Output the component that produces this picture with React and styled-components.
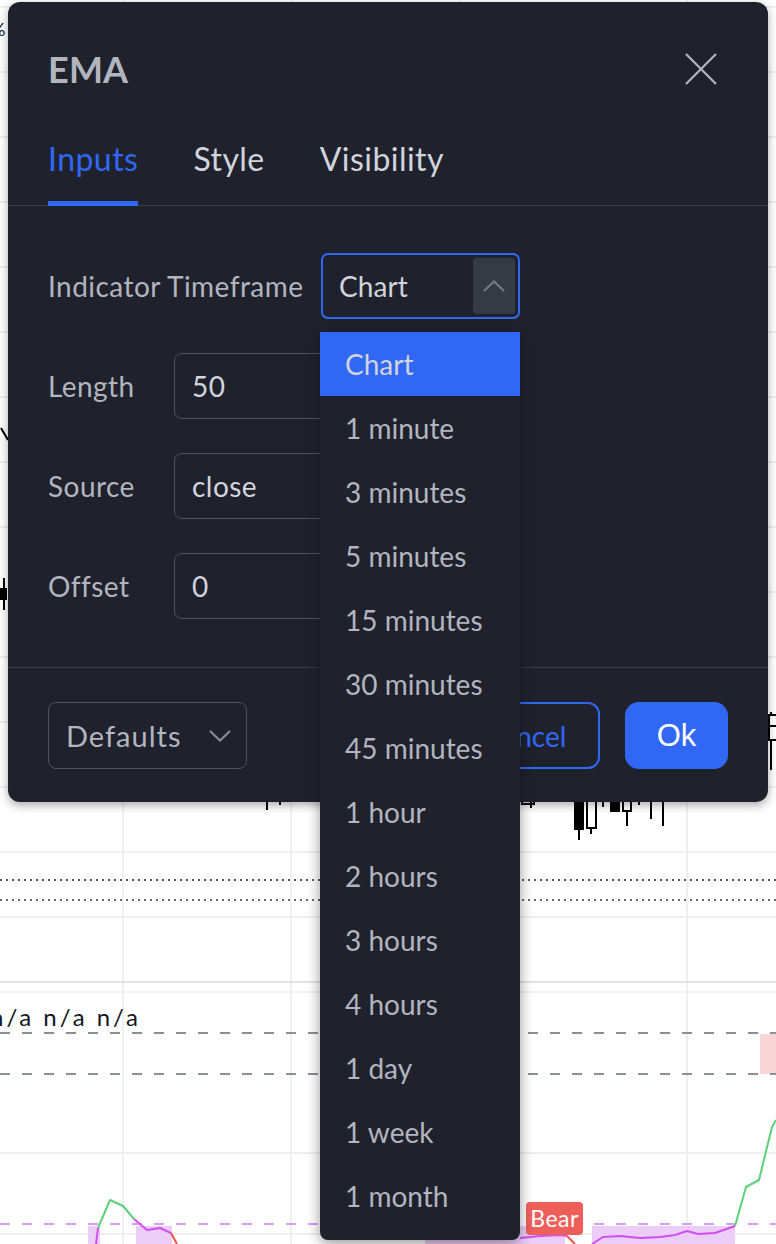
import React from "react";
import styled, { createGlobalStyle } from "styled-components";

const GlobalStyle = createGlobalStyle`
  html, body {
    margin: 0;
    padding: 0;
    background: #ffffff;
  }
  body {
    font-family: Lato, "Noto Sans", sans-serif;
    letter-spacing: 0.45px;
  }
  * {
    box-sizing: border-box;
  }
`;

const blue = "#3068f5";
const panel = "#1f222d";
const labelGray = "#b2b5be";
const textLight = "#d1d4dc";
const lineGray = "#3a3e4a";
const borderGray = "#50535e";

const Page = styled.div`
  position: relative;
  width: 776px;
  height: 1244px;
  overflow: hidden;
  background: #ffffff;
`;

const ChartSvg = styled.svg`
  display: block;
`;

const Dialog = styled.div`
  position: absolute;
  left: 8px;
  top: 2px;
  width: 760px;
  height: 800px;
  display: flex;
  flex-direction: column;
  background: ${panel};
  border-radius: 12px;
  box-shadow: 0 3px 10px rgba(0, 0, 0, 0.35);
`;

const TitleRow = styled.div`
  display: flex;
  align-items: center;
  justify-content: space-between;
  height: 134px;
  padding: 0 51px 0 40px;
`;

const Title = styled.h2`
  margin: 0;
  font-size: 36px;
  font-weight: 700;
  color: ${labelGray};
  letter-spacing: 0.2px;
`;

const CloseBtn = styled.div`
  display: flex;
  width: 32px;
  height: 32px;
`;

const TabBar = styled.div`
  display: flex;
  gap: 55px;
  height: 70px;
  padding: 0 40px;
  border-bottom: 1px solid ${lineGray};
`;

const Tab = styled.div`
  height: calc(100% + 1px);
  margin-bottom: -1px;
  padding-top: 3px;
  font-size: 32px;
  line-height: 40px;
  color: ${({ $active }) => ($active ? blue : textLight)};
  border-bottom: 5px solid ${({ $active }) => ($active ? blue : "transparent")};
`;

const Body = styled.div`
  display: flex;
  flex-direction: column;
  gap: 34px;
  padding: 47px 40px 48px;
`;

const Row = styled.div`
  display: flex;
  align-items: center;
  height: 66px;
`;

const Label = styled.div`
  width: ${({ $w }) => $w}px;
  flex-shrink: 0;
  font-size: 28px;
  color: ${labelGray};
  white-space: nowrap;
`;

const SelectWrap = styled.div`
  position: relative;
`;

const SelectBox = styled.div`
  display: flex;
  align-items: center;
  width: 199px;
  height: 66px;
  padding: 0 3px 0 16px;
  border: 2px solid ${blue};
  border-radius: 7px;
  font-size: 28px;
  letter-spacing: 0.1px;
  color: ${textLight};
`;

const ArrowBtn = styled.div`
  display: flex;
  align-items: center;
  justify-content: center;
  margin-left: auto;
  width: 42px;
  height: 56px;
  background: #363a45;
  border-radius: 4px;
`;

const Input = styled.div`
  display: flex;
  align-items: center;
  width: 330px;
  height: 66px;
  padding-left: 17px;
  border: 1.5px solid ${borderGray};
  border-radius: 8px;
  font-size: 28px;
  color: ${textLight};
`;

const Menu = styled.div`
  position: absolute;
  top: calc(100% + 13px);
  left: -1px;
  z-index: 5;
  width: 200px;
  padding-bottom: 12px;
  background: ${panel};
  border-radius: 0 0 8px 8px;
  box-shadow: 0 4px 14px rgba(0, 0, 0, 0.4);
`;

const MenuItem = styled.div`
  display: flex;
  align-items: center;
  height: 64px;
  padding-left: 25px;
  font-size: 28px;
  letter-spacing: 0;
  color: ${({ $active }) => ($active ? textLight : labelGray)};
  background: ${({ $active }) => ($active ? blue : "transparent")};
`;

const Footer = styled.div`
  display: flex;
  align-items: center;
  gap: 25px;
  padding: 34px 40px 33px;
  border-top: 1px solid ${lineGray};
`;

const DefaultsBtn = styled.div`
  display: flex;
  align-items: center;
  justify-content: space-between;
  width: 199px;
  height: 67px;
  margin-right: auto;
  padding: 0 15px 0 17px;
  border: 1.5px solid ${borderGray};
  border-radius: 8px;
  font-size: 29px;
  letter-spacing: 1px;
  color: ${labelGray};
`;

const Button = styled.div`
  display: flex;
  align-items: center;
  justify-content: center;
  width: ${({ $w }) => $w}px;
  height: 67px;
  border-radius: ${({ $primary }) => ($primary ? 14 : 12)}px;
  border: 2px solid ${blue};
  background: ${({ $primary }) => ($primary ? blue : "transparent")};
  color: ${({ $primary }) => ($primary ? "#ffffff" : blue)};
  font-family: ${({ $primary }) =>
    $primary ? '"Liberation Sans", Arial, sans-serif' : "Lato, sans-serif"};
  font-size: ${({ $primary }) => ($primary ? 31 : 28)}px;
  letter-spacing: 0;
`;

const timeframes = [
  "Chart",
  "1 minute",
  "3 minutes",
  "5 minutes",
  "15 minutes",
  "30 minutes",
  "45 minutes",
  "1 hour",
  "2 hours",
  "3 hours",
  "4 hours",
  "1 day",
  "1 week",
  "1 month",
];

const gridRows = Array.from({ length: 15 }, (_, i) => 7 + i * 65);

function Chart() {
  const green = "#5ad27a";
  const purple = "#d24ef2";
  const red = "#ef5350";
  return (
    <ChartSvg width="776" height="1244" viewBox="0 0 776 1244">
      <rect width="776" height="1244" fill="#fff" />
      {[123, 291, 459, 687].map((x) => (
        <line key={x} x1={x} y1="0" x2={x} y2="1244" stroke="#efefef" strokeWidth="2" />
      ))}
      {gridRows.map((y) => (
        <line key={y} x1="0" y1={y} x2="776" y2={y} stroke="#efefef" strokeWidth="2" />
      ))}
      <line x1="0" y1="982" x2="776" y2="982" stroke="#e2e2e2" strokeWidth="2" />
      <line x1="0" y1="992" x2="776" y2="992" stroke="#f0f0f0" strokeWidth="2" />
      <line x1="0" y1="1153" x2="776" y2="1153" stroke="#efefef" strokeWidth="2" />
      <line x1="0" y1="1234" x2="776" y2="1234" stroke="#efefef" strokeWidth="2" />

      <line x1="0" y1="880" x2="776" y2="880" stroke="#555" strokeWidth="2" strokeDasharray="2 4" />
      <line x1="0" y1="900" x2="776" y2="900" stroke="#666" strokeWidth="2" strokeDasharray="2 4" />

      <rect x="760" y="1034" width="16" height="40" fill="#f8d4d4" />
      <line x1="0" y1="1033" x2="776" y2="1033" stroke="#8c8f98" strokeWidth="2" strokeDasharray="10 12" />
      <line x1="0" y1="1074" x2="776" y2="1074" stroke="#8c8f98" strokeWidth="2" strokeDasharray="10 12" />

      <text x="-10" y="1026" fontFamily="Lato, sans-serif" fontSize="24" letterSpacing="3" fill="#131722">
        n/a n/a n/a
      </text>
      <text x="-9" y="36" fontFamily="Lato, sans-serif" fontSize="18" fill="#131722">%</text>

      {/* candles */}
      <g stroke="#000" strokeWidth="2" fill="none">
        <line x1="1" y1="428" x2="8" y2="440" />
        <line x1="4" y1="578" x2="4" y2="610" />
        <line x1="267" y1="798" x2="267" y2="810" />
        <line x1="280" y1="798" x2="280" y2="805" />
        <line x1="531" y1="798" x2="531" y2="808" />
        <rect x="522" y="798" width="12" height="6" />
        <line x1="579" y1="798" x2="579" y2="840" />
        <line x1="591" y1="798" x2="591" y2="834" />
        <rect x="587" y="798" width="9" height="30" fill="#fff" />
        <line x1="603" y1="798" x2="603" y2="807" />
        <line x1="627" y1="798" x2="627" y2="826" />
        <rect x="623" y="798" width="8" height="13" fill="#fff" />
        <line x1="639" y1="798" x2="639" y2="805" />
        <line x1="651" y1="798" x2="651" y2="819" />
        <line x1="663" y1="798" x2="663" y2="826" />
        <line x1="771" y1="712" x2="771" y2="770" />
        <rect x="769" y="715" width="12" height="25" fill="#fff" />
        <line x1="769" y1="726" x2="781" y2="726" />
      </g>
      <rect x="0" y="588" width="7" height="12" fill="#000" />
      <rect x="574" y="798" width="10" height="32" fill="#000" />
      <rect x="610" y="798" width="10" height="14" fill="#000" />

      {/* oscillator pane */}
      <g fill="#ebcdf7">
        <rect x="88" y="1226" width="12" height="18" />
        <rect x="136" y="1226" width="36" height="18" />
        <rect x="425" y="1226" width="140" height="18" />
        <rect x="592" y="1226" width="143" height="18" />
      </g>
      <line x1="0" y1="1224" x2="776" y2="1224" stroke="#dc9cf3" strokeWidth="2" strokeDasharray="10 12" />
      <g fill="none" strokeWidth="2" strokeLinejoin="round">
        <polyline points="96,1244 98,1228" stroke={purple} />
        <polyline points="98,1228 110,1200 123,1206 134,1219" stroke={green} />
        <polyline points="134,1219 147,1230 160,1228 171,1233" stroke={purple} />
        <polyline points="171,1233 177,1244" stroke={red} />
        <polyline points="520,1238 540,1236 560,1235 567,1236" stroke={purple} />
        <polyline points="567,1236 575,1244" stroke={red} />
        <polyline points="592,1244 603,1237 620,1236 640,1238 660,1237 675,1235 687,1231 698,1234 715,1233 735,1226" stroke={purple} />
        <polyline points="735,1226 746,1187 759,1180 772,1127 776,1120" stroke={green} />
      </g>
      <rect x="526" y="1202" width="57" height="33" rx="4" fill="#ef5f5a" />
      <text x="554.5" y="1227" textAnchor="middle" fontFamily="Lato, sans-serif" fontSize="23" fill="#fff">
        Bear
      </text>
    </ChartSvg>
  );
}

function CloseIcon() {
  return (
    <svg width="32" height="32" viewBox="0 0 32 32">
      <path d="M1 1 L31 31 M31 1 L1 31" stroke={labelGray} strokeWidth="2.2" fill="none" />
    </svg>
  );
}

function Chevron({ up, color }) {
  return (
    <svg width="22" height="12" viewBox="0 0 22 12">
      <polyline
        points={up ? "1,11 11,1.5 21,11" : "1,1 11,10.5 21,1"}
        fill="none"
        stroke={color}
        strokeWidth="2"
      />
    </svg>
  );
}

export default function App() {
  return (
    <>
      <GlobalStyle />
      <Page>
        <Chart />
        <Dialog>
          <TitleRow>
            <Title>EMA</Title>
            <CloseBtn>
              <CloseIcon />
            </CloseBtn>
          </TitleRow>
          <TabBar>
            <Tab $active>Inputs</Tab>
            <Tab>Style</Tab>
            <Tab>Visibility</Tab>
          </TabBar>
          <Body>
            <Row>
              <Label $w={273}>Indicator Timeframe</Label>
              <SelectWrap>
                <SelectBox>
                  Chart
                  <ArrowBtn>
                    <Chevron up color="#787b86" />
                  </ArrowBtn>
                </SelectBox>
                <Menu>
                  {timeframes.map((t, i) => (
                    <MenuItem key={t} $active={i === 0}>
                      {t}
                    </MenuItem>
                  ))}
                </Menu>
              </SelectWrap>
            </Row>
            <Row>
              <Label $w={126}>Length</Label>
              <Input>50</Input>
            </Row>
            <Row>
              <Label $w={126}>Source</Label>
              <Input>close</Input>
            </Row>
            <Row>
              <Label $w={126}>Offset</Label>
              <Input>0</Input>
            </Row>
          </Body>
          <Footer>
            <DefaultsBtn>
              Defaults
              <Chevron color="#8a8d96" />
            </DefaultsBtn>
            <Button $w={150}>Cancel</Button>
            <Button $w={103} $primary>
              Ok
            </Button>
          </Footer>
        </Dialog>
      </Page>
    </>
  );
}
